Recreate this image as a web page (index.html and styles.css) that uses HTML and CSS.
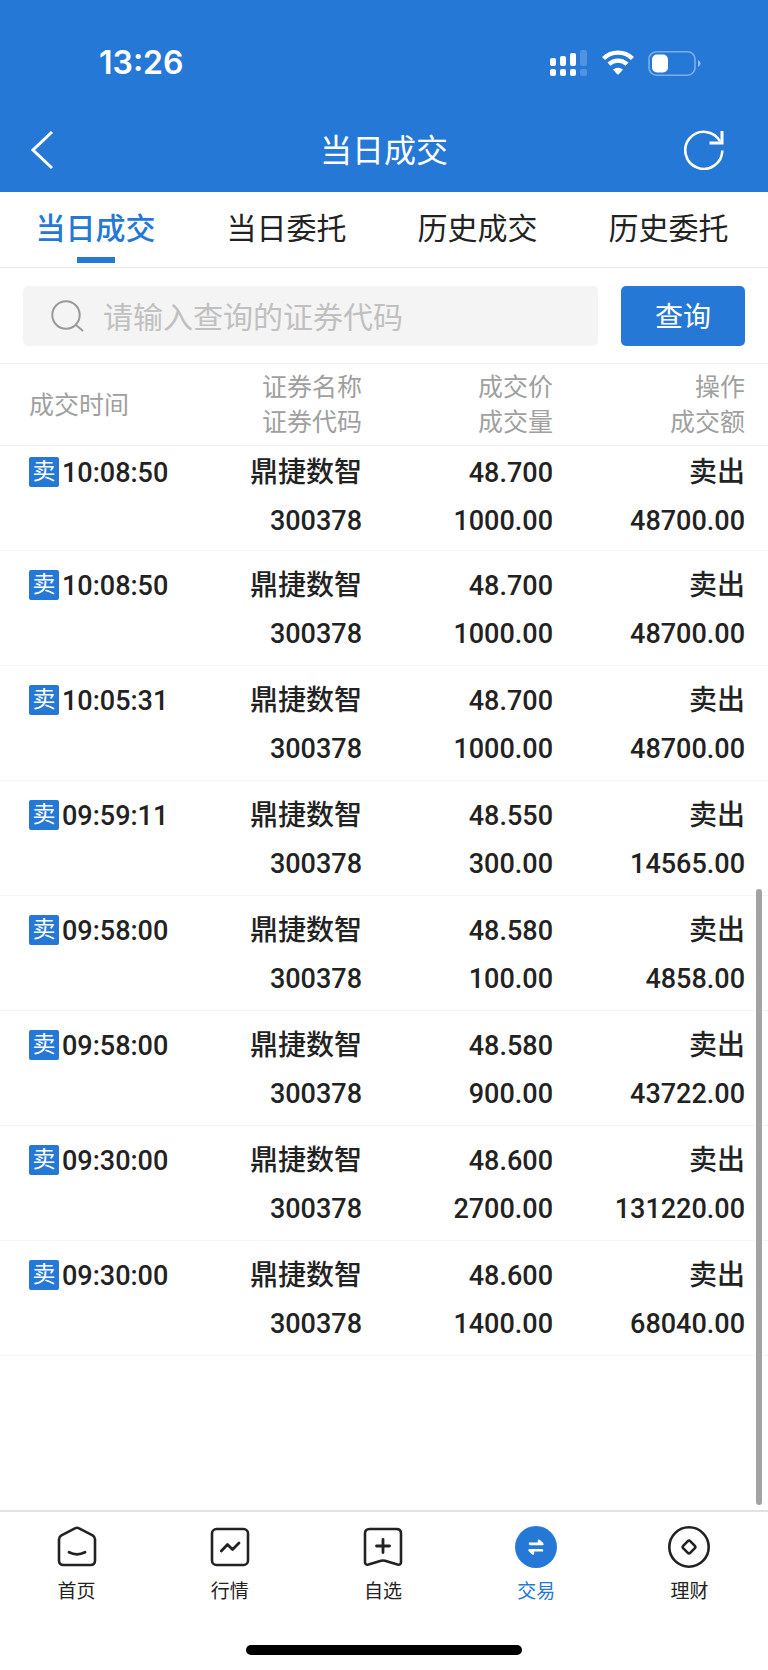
FILE: index.html
```
<!DOCTYPE html>
<html lang="zh-CN">
<head>
    <meta charset="UTF-8">
    <meta name="viewport" content="width=device-width, initial-scale=1.0">
    <title>当日成交</title>
    <link rel="stylesheet" href="styles.css">
</head>
<body>
    <header class="header">
        <div class="status-bar">
            <span class="status-time">13:26</span>
            <div class="status-icons">
                <svg width="38" height="28" viewBox="0 0 38 28" fill="#fff">
                    <rect x="0" y="9" width="6" height="8" rx="2"/>
                    <rect x="10" y="7" width="6" height="10" rx="2"/>
                    <rect x="20" y="4" width="6" height="13" rx="2"/>
                    <rect x="30" y="1" width="7" height="16" rx="2" opacity="0.2"/>
                    <rect x="0" y="20" width="6" height="7" rx="2"/>
                    <rect x="10" y="20" width="6" height="7" rx="2"/>
                    <rect x="20" y="20" width="6" height="7" rx="2"/>
                    <rect x="30" y="20" width="7" height="7" rx="2" opacity="0.2"/>
                </svg>
                <svg width="32" height="28" viewBox="0 0 32 28" fill="none" stroke="#fff">
                    <path d="M1.5 9.5 A20.8 20.8 0 0 1 30.5 9.5" stroke-width="4.4"/>
                    <path d="M7 15.2 A13 13 0 0 1 25 15.2" stroke-width="4.4"/>
                    <path d="M11 20.6 Q16 17 21 20.6 L16.8 25.2 Q16 26 15.2 25.2 Z" fill="#fff" stroke="none"/>
                </svg>
                <svg width="54" height="28" viewBox="0 0 54 28">
                    <rect x="1" y="2.7" width="46" height="23.5" rx="7.5" fill="none" stroke="#fff" stroke-width="1.6" opacity="0.4"/>
                    <rect x="4" y="5.5" width="16" height="18" rx="5" fill="#fff"/>
                    <path d="M50 11 Q52.5 12.3 52.5 14.5 Q52.5 16.7 50 18 Z" fill="#fff" opacity="0.5"/>
                </svg>
            </div>
        </div>
        <div class="nav-bar">
            <button type="button" class="icon-btn" aria-label="返回">
                <svg width="40" height="40" viewBox="0 0 40 40" fill="none" stroke="#fff" stroke-width="3">
                    <path d="M28 2 L9 20 L28 38"/>
                </svg>
            </button>
            <h1 class="title">当日成交</h1>
            <button type="button" class="icon-btn" aria-label="刷新">
                <svg width="40" height="40" viewBox="0 0 40 40" fill="none" stroke="#fff" stroke-width="2.6">
                    <path d="M38.3 20.5 A18.5 18.5 0 1 1 36 11.4"/>
                    <path d="M38 1 V13 H25.5" stroke-width="3"/>
                </svg>
            </button>
        </div>
    </header>

    <nav class="tabs">
        <a href="#" class="tab active">当日成交</a>
        <a href="#" class="tab">当日委托</a>
        <a href="#" class="tab">历史成交</a>
        <a href="#" class="tab">历史委托</a>
    </nav>

    <form class="search">
        <label class="search-box">
            <svg width="34" height="34" viewBox="0 0 34 34" fill="none" stroke="#999" stroke-width="2">
                <circle cx="15" cy="16" r="13.7"/>
                <path d="M24.5 25.5 L32 32"/>
            </svg>
            <input type="text" class="search-input" placeholder="请输入查询的证券代码" aria-label="证券代码">
        </label>
        <button type="button" class="search-btn">查询</button>
    </form>

    <main class="content">
        <table class="deals">
            <thead>
                <tr>
                    <th>成交时间</th>
                    <th>证券名称<br>证券代码</th>
                    <th>成交价<br>成交量</th>
                    <th>操作<br>成交额</th>
                </tr>
            </thead>
            <tbody>
                <tr>
                    <td><span class="tag">卖</span>10:08:50</td>
                    <td><span class="name">鼎捷数智</span><br>300378</td>
                    <td>48.700<br>1000.00</td>
                    <td><span class="name">卖出</span><br>48700.00</td>
                </tr>
                <tr>
                    <td><span class="tag">卖</span>10:08:50</td>
                    <td><span class="name">鼎捷数智</span><br>300378</td>
                    <td>48.700<br>1000.00</td>
                    <td><span class="name">卖出</span><br>48700.00</td>
                </tr>
                <tr>
                    <td><span class="tag">卖</span>10:05:31</td>
                    <td><span class="name">鼎捷数智</span><br>300378</td>
                    <td>48.700<br>1000.00</td>
                    <td><span class="name">卖出</span><br>48700.00</td>
                </tr>
                <tr>
                    <td><span class="tag">卖</span>09:59:11</td>
                    <td><span class="name">鼎捷数智</span><br>300378</td>
                    <td>48.550<br>300.00</td>
                    <td><span class="name">卖出</span><br>14565.00</td>
                </tr>
                <tr>
                    <td><span class="tag">卖</span>09:58:00</td>
                    <td><span class="name">鼎捷数智</span><br>300378</td>
                    <td>48.580<br>100.00</td>
                    <td><span class="name">卖出</span><br>4858.00</td>
                </tr>
                <tr>
                    <td><span class="tag">卖</span>09:58:00</td>
                    <td><span class="name">鼎捷数智</span><br>300378</td>
                    <td>48.580<br>900.00</td>
                    <td><span class="name">卖出</span><br>43722.00</td>
                </tr>
                <tr>
                    <td><span class="tag">卖</span>09:30:00</td>
                    <td><span class="name">鼎捷数智</span><br>300378</td>
                    <td>48.600<br>2700.00</td>
                    <td><span class="name">卖出</span><br>131220.00</td>
                </tr>
                <tr>
                    <td><span class="tag">卖</span>09:30:00</td>
                    <td><span class="name">鼎捷数智</span><br>300378</td>
                    <td>48.600<br>1400.00</td>
                    <td><span class="name">卖出</span><br>68040.00</td>
                </tr>
            </tbody>
        </table>
        <div class="scrollbar"></div>
    </main>

    <footer class="footer">
        <nav class="tab-bar">
            <a href="#" class="bar-item">
                <svg width="42" height="42" viewBox="0 0 42 42" fill="none" stroke="#222" stroke-width="2.6" stroke-linecap="round" stroke-linejoin="round">
                    <path d="M19.4 2.2 Q21 1.3 22.6 2.2 L36.6 9.4 Q39 10.8 39 13.2 V34.5 Q39 39 34.5 39 H7.5 Q3 39 3 34.5 V13.2 Q3 10.8 5.4 9.4 Z"/>
                    <path d="M13 26.3 Q21 30.3 29 26.3" stroke-width="2.8"/>
                </svg>
                <span>首页</span>
            </a>
            <a href="#" class="bar-item">
                <svg width="42" height="42" viewBox="0 0 42 42" fill="none" stroke="#222" stroke-width="2.6" stroke-linecap="round" stroke-linejoin="round">
                    <rect x="3" y="3" width="36" height="36" rx="4.5"/>
                    <path d="M12.3 25 L18.5 18.5 L23.5 23.5 L30 17" stroke-width="2.8"/>
                </svg>
                <span>行情</span>
            </a>
            <a href="#" class="bar-item">
                <svg width="42" height="42" viewBox="0 0 42 42" fill="none" stroke="#222" stroke-width="2.6" stroke-linecap="round" stroke-linejoin="round">
                    <path d="M7.5 3 H34.5 Q39 3 39 7.5 V36 Q39 39.3 35.5 38.6 L23 34.8 Q21 34.2 19 34.8 L6.5 38.6 Q3 39.3 3 36 V7.5 Q3 3 7.5 3 Z"/>
                    <path d="M21 13.5 V26.5 M14.5 20 H27.5" stroke-width="2.8"/>
                </svg>
                <span>自选</span>
            </a>
            <a href="#" class="bar-item active">
                <svg width="42" height="42" viewBox="0 0 42 42">
                    <circle cx="21" cy="21" r="21" fill="#2678d6"/>
                    <path d="M14 16.6 H22.8 V14.4 Q23.4 12.6 25 14 L28.2 16.9 Q29.4 18.9 27.6 19.2 H14.8 Q13 18.4 14 16.6 Z M28 25.6 H19.2 V27.8 Q18.6 29.6 17 28.2 L13.8 25.3 Q12.6 23.3 14.4 23 H27.2 Q29 23.8 28 25.6 Z" fill="#fff"/>
                </svg>
                <span>交易</span>
            </a>
            <a href="#" class="bar-item">
                <svg width="42" height="42" viewBox="0 0 42 42" fill="none" stroke="#222" stroke-width="2.6">
                    <circle cx="21" cy="21" r="19.7"/>
                    <rect x="16" y="16" width="10" height="10" rx="2" transform="rotate(45 21 21)"/>
                </svg>
                <span>理财</span>
            </a>
        </nav>
        <div class="home-indicator"></div>
    </footer>
</body>
</html>
```
FILE: styles.css
```
* {
    margin: 0;
    padding: 0;
    box-sizing: border-box;
}

body {
    display: flex;
    flex-direction: column;
    min-height: 100vh;
    background-color: #fff;
    color: #222;
    font-family: 'Noto Sans CJK SC', 'Microsoft YaHei', sans-serif;
}

a {
    color: inherit;
    text-decoration: none;
}

button {
    border: none;
    color: #fff;
    font-family: inherit;
    cursor: pointer;
}

svg {
    display: block;
    flex-shrink: 0;
}

.header {
    background-color: #2678d6;
    color: #fff;
}

.status-bar {
    display: flex;
    align-items: center;
    justify-content: space-between;
    height: 108px;
    padding: 17px 66px 0 99px;
}

.status-time {
    font-family: Inter, sans-serif;
    font-size: 32px;
    font-weight: 600;
}

.status-icons {
    display: flex;
    align-items: center;
    gap: 14px;
}

.nav-bar {
    display: flex;
    align-items: center;
    justify-content: space-between;
    height: 84px;
    padding: 0 44px 0 24px;
}

.icon-btn {
    width: 40px;
    height: 40px;
    background: none;
}

.title {
    padding: 0 0 4px 20px;
    font-size: 32px;
    font-weight: 400;
}

.tabs {
    display: flex;
    height: 76px;
    padding-right: 4px;
    border-bottom: 1px solid #eaeaea;
}

.tab {
    display: flex;
    flex: 1;
    flex-direction: column;
    align-items: center;
    padding-top: 6px;
    font-size: 30px;
    line-height: 57px;
}

.tab.active {
    color: #2678d6;
    font-weight: 500;
}

.tab.active::after {
    content: '';
    width: 38px;
    height: 6px;
    margin-top: 2px;
    background-color: #2678d6;
}

.search {
    display: flex;
    gap: 23px;
    padding: 18px 23px 17px;
    border-bottom: 1px solid #f0f0f0;
}

.search-box {
    display: flex;
    flex: 1;
    align-items: center;
    gap: 18px;
    min-width: 0;
    height: 60px;
    padding-left: 28px;
    border-radius: 5px;
    background-color: #f4f4f4;
}

.search-input {
    flex: 1;
    min-width: 0;
    padding-bottom: 2px;
    border: none;
    outline: none;
    background: none;
    color: #222;
    font-family: inherit;
    font-size: 30px;
}

.search-input::placeholder {
    color: #c0c0c0;
}

.search-btn {
    width: 124px;
    padding-bottom: 2px;
    border-radius: 5px;
    background-color: #2678d6;
    font-size: 28px;
}

.content {
    position: relative;
    flex: 1;
}

.deals {
    width: 100%;
    table-layout: fixed;
    border-collapse: collapse;
}

.deals th {
    padding: 4px 23px 7px 0;
    border-bottom: 1px solid #f0f0f0;
    color: #a0a0a0;
    font-size: 25px;
    font-weight: 400;
    line-height: 35px;
    text-align: right;
}

.deals td {
    padding: 11px 23px 7px 0;
    border-bottom: 1px solid #f5f5f5;
    font-family: Roboto, 'Noto Sans CJK SC', sans-serif;
    font-size: 27px;
    font-weight: 500;
    line-height: 48px;
    text-align: right;
    vertical-align: top;
    white-space: nowrap;
}

/* 首行紧贴表头 */
.deals tbody tr:first-child td {
    padding-top: 3px;
    padding-bottom: 5px;
}

.deals th:nth-child(2),
.deals td:nth-child(2) {
    padding-right: 22px;
}

.deals th:first-child,
.deals td:first-child {
    padding-left: 29px;
    padding-right: 0;
    text-align: left;
}

.name {
    font-size: 28px;
}

.tag {
    display: inline-block;
    width: 30px;
    height: 30px;
    margin: 8px 3px 0 0;
    border-radius: 2px;
    background-color: #2678d6;
    color: #fff;
    font-size: 23px;
    font-weight: 400;
    line-height: 30px;
    text-align: center;
    vertical-align: top;
}

.scrollbar {
    position: absolute;
    right: 6px;
    bottom: 5px;
    width: 6px;
    height: 616px;
    border-radius: 3px;
    background-color: #a3a3a3;
}

.footer {
    border-top: 2px solid #e2e2e2;
}

.tab-bar {
    display: flex;
    padding: 14px 2px 0 0;
}

.bar-item {
    display: flex;
    flex: 1;
    flex-direction: column;
    align-items: center;
    gap: 8px;
    font-size: 19px;
    line-height: 28px;
}

.bar-item.active {
    color: #2678d6;
}

.home-indicator {
    width: 36%;
    height: 10px;
    margin: 41px auto 15px;
    border-radius: 5px;
    background-color: #000;
}
```
